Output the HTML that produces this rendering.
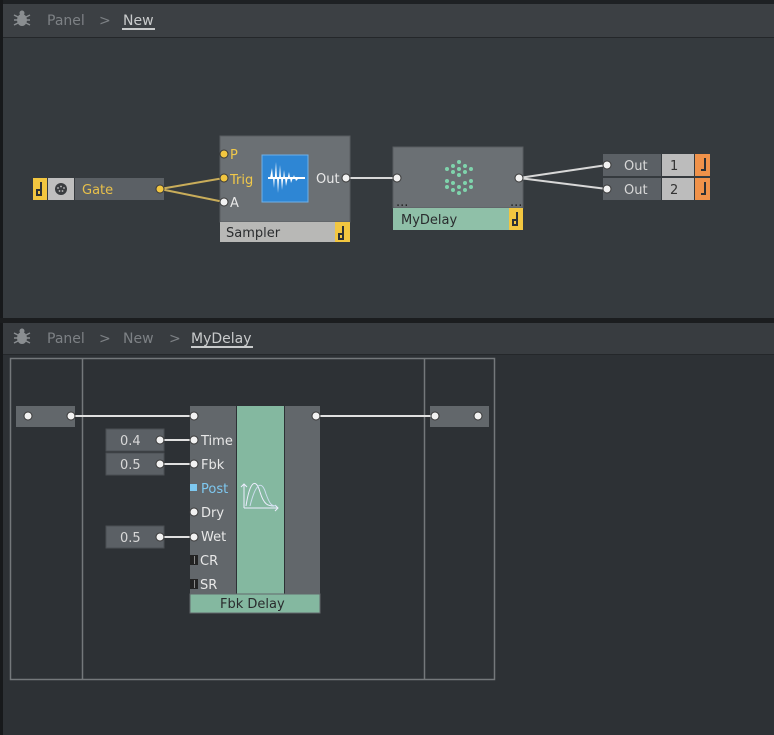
<!DOCTYPE html>
<html><head><meta charset="utf-8"><style>
html,body{margin:0;padding:0;background:#2d3135;}
svg{display:block}
text{font-family:"DejaVu Sans","Liberation Sans",sans-serif;font-size:13px}
.h{font-size:14px}
</style></head><body>
<svg width="774" height="735" viewBox="0 0 774 735" xmlns="http://www.w3.org/2000/svg">
<rect x="0" y="0" width="774" height="735" fill="#2d3135"/>
<rect x="0" y="0" width="774" height="4" fill="#1e2124"/>
<rect x="0" y="0" width="3" height="735" fill="#17191b"/>
<rect x="3" y="4" width="771" height="33" fill="#3c4044"/>
<rect x="3" y="37" width="771" height="1" fill="#24272a"/>
<rect x="3" y="38" width="771" height="280" fill="#353a3e"/>
<rect x="0" y="318" width="774" height="5" fill="#1b1d1f"/>
<rect x="3" y="323" width="771" height="31" fill="#383c40"/>
<rect x="3" y="354" width="771" height="1" fill="#24272a"/>

<g fill="#8a8e91">
<ellipse cx="22" cy="20" rx="5" ry="6"/><circle cx="22" cy="13" r="2.5"/>
<path d="M14 15l4 2M14 20h4M14 25l4-2M30 15l-4 2M30 20h-4M30 25l-4-2" stroke="#8a8e91" stroke-width="1.5"/>
</g>
<text class="h" x="47" y="25" fill="#7d8185">Panel</text>
<text class="h" x="99" y="25" fill="#7d8185">&gt;</text>
<text class="h" x="123" y="25" fill="#c9cbcc">New</text>
<rect x="122" y="28" width="33" height="2" fill="#c9cbcc"/>

<g fill="#8a8e91">
<ellipse cx="22" cy="338" rx="5" ry="6"/><circle cx="22" cy="331" r="2.5"/>
<path d="M14 333l4 2M14 338h4M14 343l4-2M30 333l-4 2M30 338h-4M30 343l-4-2" stroke="#8a8e91" stroke-width="1.5"/>
</g>
<text class="h" x="47" y="343" fill="#7d8185">Panel</text>
<text class="h" x="99" y="343" fill="#7d8185">&gt;</text>
<text class="h" x="123" y="343" fill="#7d8185">New</text>
<text class="h" x="169" y="343" fill="#7d8185">&gt;</text>
<text class="h" x="191" y="343" fill="#c9cbcc">MyDelay</text>
<rect x="191" y="346" width="62" height="2" fill="#c9cbcc"/>

<rect x="33" y="178" width="14" height="22" fill="#f2c640"/>
<path d="M41 182v13h-4v-5h3" stroke="#2d3135" stroke-width="2" fill="none"/>
<rect x="48" y="178" width="26" height="22" fill="#bfbfbf"/>
<circle cx="61" cy="189" r="6" fill="#3a3d40"/>
<g fill="#bfbfbf"><circle cx="58" cy="188" r="0.9"/><circle cx="61" cy="186.5" r="0.9"/><circle cx="64" cy="188" r="0.9"/><circle cx="59.5" cy="191" r="0.9"/><circle cx="62.5" cy="191" r="0.9"/></g>
<rect x="75" y="178" width="89" height="22" fill="#5b6065"/>
<text x="82" y="194" fill="#e8c04a">Gate</text>

<rect x="220" y="136" width="130" height="86" fill="#6b7074" stroke="#585c60"/>
<rect x="220" y="222" width="115" height="20" fill="#b8b8b6"/>
<text x="226" y="237" fill="#2a2c2e">Sampler</text>
<rect x="335" y="222" width="15" height="20" fill="#f2c640"/>
<path d="M343 226v13h-4v-5h3" stroke="#2d3135" stroke-width="2" fill="none"/>
<text x="230" y="159" fill="#f0c84a">P</text>
<text x="230" y="184" fill="#f0c84a">Trig</text>
<text x="230" y="207" fill="#e8e8e8">A</text>
<text x="316" y="183" fill="#e8e8e8">Out</text>
<rect x="262" y="155" width="46" height="47" fill="#2e86d4" stroke="#6fb0e8"/>
<path d="M270 178 L272 168 L274 188 L276 162 L278 193 L280 165 L282 190 L284 170 L286 186 L289 172 L291 183 L294 175 L296 181 L300 177 L303 179 Z" fill="#fff"/>
<rect x="268" y="177" width="37" height="2" fill="#fff"/>

<rect x="393" y="147" width="130" height="61" fill="#6b7074" stroke="#585c60"/>
<text x="396" y="206" fill="#222" font-size="8">...</text>
<text x="510" y="206" fill="#222" font-size="8">...</text>
<rect x="393" y="208" width="116" height="22" fill="#8fc0a8"/>
<text x="401" y="224" fill="#2a2c2e">MyDelay</text>
<rect x="509" y="208" width="14" height="22" fill="#f2c640"/>
<path d="M517 212v13h-4v-5h3" stroke="#2d3135" stroke-width="2" fill="none"/>
<g fill="#7fd4ac">
<circle cx="459" cy="162" r="2"/><circle cx="453" cy="166" r="2"/><circle cx="465" cy="166" r="2"/>
<circle cx="447" cy="169" r="2"/><circle cx="459" cy="169" r="2"/><circle cx="471" cy="169" r="2"/>
<circle cx="453" cy="172" r="2"/><circle cx="465" cy="172" r="2"/><circle cx="459" cy="175" r="2"/>
<circle cx="447" cy="181" r="2"/><circle cx="471" cy="181" r="2"/><circle cx="453" cy="183" r="2"/>
<circle cx="465" cy="183" r="2"/><circle cx="447" cy="187" r="2"/><circle cx="459" cy="187" r="2"/>
<circle cx="471" cy="187" r="2"/><circle cx="453" cy="190" r="2"/><circle cx="465" cy="190" r="2"/>
<circle cx="459" cy="193" r="2"/>
</g>

<rect x="603" y="154" width="58" height="22" fill="#5b6065"/>
<rect x="662" y="154" width="32" height="22" fill="#bcbcbc"/>
<rect x="695" y="154" width="15" height="22" fill="#f0924a"/>
<rect x="603" y="178" width="58" height="22" fill="#5b6065"/>
<rect x="662" y="178" width="32" height="22" fill="#bcbcbc"/>
<rect x="695" y="178" width="15" height="22" fill="#f0924a"/>
<text x="624" y="170" fill="#d8d8d8">Out</text>
<text x="624" y="194" fill="#d8d8d8">Out</text>
<text x="670" y="170" fill="#333">1</text>
<text x="670" y="194" fill="#333">2</text>
<path d="M705 158v12h-4" stroke="#2d3135" stroke-width="2" fill="none"/>
<path d="M705 182v12h-4" stroke="#2d3135" stroke-width="2" fill="none"/>

<path d="M160 189 L224 178 M160 189 L224 202" stroke="#c9ad5a" stroke-width="2" fill="none"/>
<path d="M346 178 L397 178 M519 178 L607 165 M519 178 L607 189" stroke="#d8d8d8" stroke-width="2" fill="none"/>
<g fill="#f2c640" stroke="#3a3a3a" stroke-width="1">
<circle cx="160" cy="189" r="4"/><circle cx="224" cy="154" r="4"/><circle cx="224" cy="178" r="4"/>
</g>
<g fill="#f2f2f2" stroke="#3a3a3a" stroke-width="1">
<circle cx="224" cy="202" r="4"/><circle cx="346" cy="178" r="4"/><circle cx="397" cy="178" r="4"/>
<circle cx="519" cy="178" r="4"/><circle cx="607" cy="165" r="4"/><circle cx="607" cy="189" r="4"/>
</g>

<rect x="10.5" y="358.5" width="484" height="321" fill="none" stroke="#74787b" stroke-width="1.5"/>
<path d="M82.5 359V680M424.5 359V680" stroke="#74787b" stroke-width="1.5"/>

<rect x="16" y="406" width="59" height="21" fill="#62676b"/>
<rect x="430" y="406" width="59" height="21" fill="#62676b"/>

<rect x="190" y="406" width="46" height="188" fill="#62676b"/>
<rect x="237" y="406" width="47" height="188" fill="#84b8a0"/>
<rect x="285" y="406" width="35" height="188" fill="#62676b"/>
<rect x="190" y="594" width="130" height="19" fill="#84b8a0" stroke="#62676b"/>
<text x="220" y="608" fill="#2a2c2e">Fbk Delay</text>
<g fill="none" stroke="#eef" stroke-width="1">
<path d="M244 508h34M275 505l3 3-3 3M244 484v24M241 487l3-3 3 3"/>
<path d="M246 506 C250 480,256 478,260 492 C264 505,268 506,274 506"/>
<path d="M250 506 C256 482,262 480,266 494 C270 505,272 506,276 506" stroke="#cde"/>
</g>
<text x="201" y="445" fill="#e8e8e8">Time</text>
<text x="201" y="469" fill="#e8e8e8">Fbk</text>
<text x="201" y="493" fill="#7ec8f0">Post</text>
<text x="201" y="517" fill="#e8e8e8">Dry</text>
<text x="201" y="541" fill="#e8e8e8">Wet</text>
<text x="200" y="565" fill="#e8e8e8">CR</text>
<text x="200" y="589" fill="#e8e8e8">SR</text>
<rect x="190" y="484" width="7" height="7" fill="#7ec8f0"/>
<rect x="190" y="555" width="8" height="10" fill="#222"/>
<rect x="190" y="579" width="8" height="10" fill="#222"/>
<g fill="#888"><rect x="194" y="556" width="1" height="8"/><rect x="194" y="580" width="1" height="8"/></g>

<rect x="106" y="429" width="58" height="22" fill="#5b6065" stroke="#4a4e52"/>
<rect x="106" y="453" width="58" height="22" fill="#5b6065" stroke="#4a4e52"/>
<rect x="106" y="526" width="58" height="22" fill="#5b6065" stroke="#4a4e52"/>
<text x="120" y="445" fill="#d8d8d8">0.4</text>
<text x="120" y="469" fill="#d8d8d8">0.5</text>
<text x="120" y="542" fill="#d8d8d8">0.5</text>

<path d="M71 416H194M316 416H435M160 440H194M160 464H194M160 537H194" stroke="#e0e0e0" stroke-width="2"/>
<g fill="#f2f2f2" stroke="#3a3a3a" stroke-width="1">
<circle cx="28" cy="416" r="4"/><circle cx="71" cy="416" r="4"/><circle cx="194" cy="416" r="4"/>
<circle cx="316" cy="416" r="4"/><circle cx="435" cy="416" r="4"/><circle cx="478" cy="416" r="4"/>
<circle cx="160" cy="440" r="4"/><circle cx="194" cy="440" r="4"/>
<circle cx="160" cy="464" r="4"/><circle cx="194" cy="464" r="4"/>
<circle cx="194" cy="512" r="4"/>
<circle cx="160" cy="537" r="4"/><circle cx="194" cy="537" r="4"/>
</g>
</svg>
</body></html>
